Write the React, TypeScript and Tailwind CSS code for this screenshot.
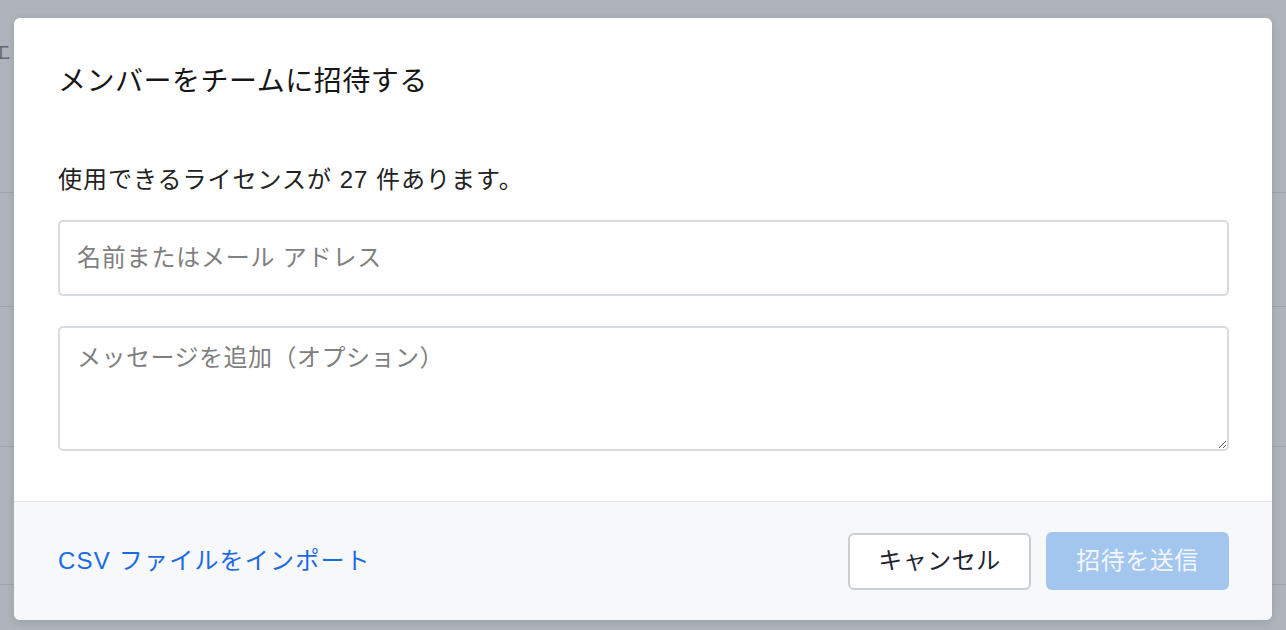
import React from "react";

const font = { fontFamily: '"Liberation Sans", "Noto Sans CJK JP", sans-serif' };

const BackdropRows = () => (
    <div className="flex flex-col">
        <div className="h-[193px] border-b border-[#9ea3ab] pt-[38px]">
            <span className="block -ml-[9px] text-[20px] leading-[30px] text-[#656a72]">エ</span>
        </div>
        <div className="h-[114px] border-b border-[#9ea3ab]" />
        <div className="h-[140px] border-b border-[#9ea3ab]" />
        <div className="h-[138px] border-b border-[#9ea3ab]" />
    </div>
);

const InviteModal = () => {
    return (
        <div className="absolute left-[14px] top-[18px] w-[1258px] rounded-[6px] bg-white shadow-[0_2px_8px_rgba(0,0,0,0.12)] overflow-hidden">
            <div className="pl-11 pr-[43px] pt-[43px] pb-[50px]">
                {/* Title */}
                <h2 className="text-[28px] leading-[42px] tracking-[0.5px] text-[#161616]">メンバーをチームに招待する</h2>

                {/* License count */}
                <p className="mt-[59px] text-[24px] leading-[36px] tracking-[1px] text-[#222]">
                    使用できるライセンスが 27 件あります。
                </p>

                {/* Name / email */}
                <input
                    type="text"
                    placeholder="名前またはメール アドレス"
                    className="mt-[22px] block w-full h-[76px] rounded-[5px] border-2 border-[#d8dbdf] pl-[17px] text-[24px] tracking-[0.8px] text-[#222] placeholder:text-[#7f7f7f] outline-none"
                    style={font}
                />

                {/* Message */}
                <textarea
                    placeholder="メッセージを追加（オプション）"
                    className="mt-[30px] block w-full h-[125px] rounded-[5px] border-2 border-[#d8dbdf] pl-[17px] pt-[12px] text-[24px] leading-[36px] tracking-[0.5px] text-[#222] placeholder:text-[#7f7f7f] outline-none"
                    style={font}
                />
            </div>

            {/* Footer */}
            <div className="h-[119px] border-t border-[#e6e8eb] bg-[#f7f8fa] pl-11 pr-[43px] flex items-center justify-between">
                <a className="text-[24px] leading-[36px] tracking-[1.2px] text-[#1a6ae3] cursor-pointer">CSV ファイルをインポート</a>
                <div className="flex items-center gap-[15px]">
                    <button
                        className="w-[183px] h-[57px] rounded-[6px] border-2 border-[#cbced3] bg-white text-[24px] tracking-[0.5px] text-[#1e2530]"
                        style={font}
                    >
                        キャンセル
                    </button>
                    <button
                        disabled
                        className="w-[183px] h-[58px] rounded-[6px] bg-[#a3c6ef] text-[24px] tracking-[0.5px] text-[#f3f7fd]"
                        style={font}
                    >
                        招待を送信
                    </button>
                </div>
            </div>
        </div>
    );
};

const App = () => {
    return (
        <div className="relative w-[1286px] h-[630px] overflow-hidden bg-[#afb4bb]" style={font}>
            <BackdropRows />
            <InviteModal />
        </div>
    );
};

export default App;
